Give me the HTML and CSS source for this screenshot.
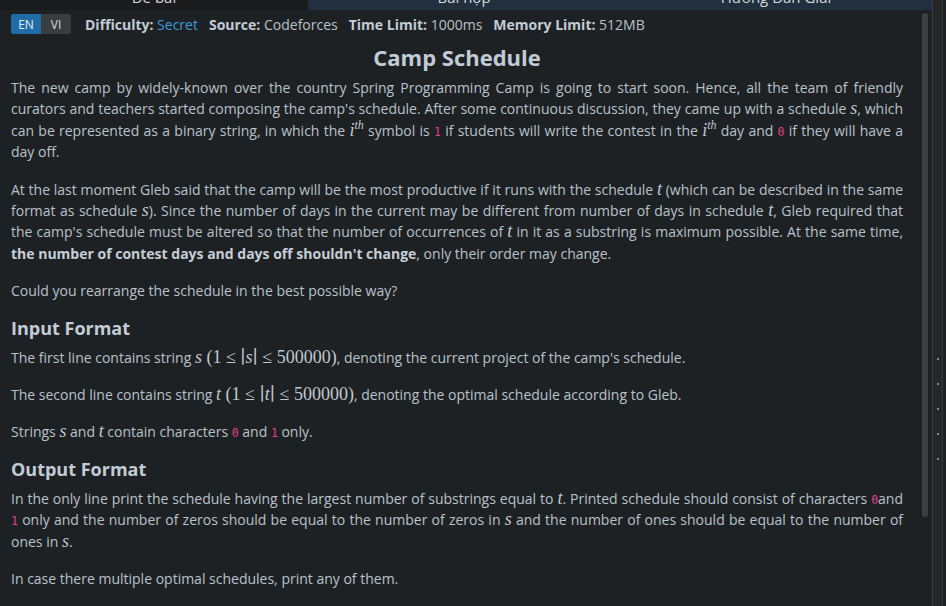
FILE: index.html
```html
<!DOCTYPE html>
<html lang="en">
<head>
<meta charset="utf-8">
<title>Camp Schedule</title>
<link rel="stylesheet" href="styles.css">
</head>
<body>
<div class="app">
  <div class="main">
    <div class="tabs">
      <div class="tab tab-plain"><span class="tab-label">Đề bài</span></div>
      <div class="tab tab-navy"><span class="tab-label">Bài nộp</span></div>
      <div class="tab tab-navy"><span class="tab-label">Hướng Dẫn Giải</span></div>
    </div>
    <div class="scroll-area">
      <div class="content">
        <div class="meta">
          <div class="lang-group">
            <span class="lang lang-active">EN</span><span class="lang">VI</span>
          </div>
          <span class="meta-item"><b>Difficulty:</b> <span class="secret">Secret</span></span>
          <span class="meta-item"><b>Source:</b> Codeforces</span>
          <span class="meta-item"><b>Time Limit:</b> 1000ms</span>
          <span class="meta-item"><b>Memory Limit:</b> 512MB</span>
        </div>

        <h1 class="title">Camp Schedule</h1>

        <p class="just">The new camp by widely-known over the country Spring Programming Camp is going to start soon. Hence, all the team of friendly curators and teachers started composing the camp's schedule. After some continuous discussion, they came up with a schedule <span class="math"><span class="mi">s</span></span>, which can be represented as a binary string, in which the <span class="math"><span class="mi">i</span><sup class="msup">th</sup></span> symbol is <code class="code">1</code> if students will write the contest in the <span class="math"><span class="mi">i</span><sup class="msup">th</sup></span> day and <code class="code">0</code> if they will have a day off.</p>

        <p class="just">At the last moment Gleb said that the camp will be the most productive if it runs with the schedule <span class="math"><span class="mi">t</span></span> (which can be described in the same format as schedule <span class="math"><span class="mi">s</span></span>). Since the number of days in the current may be different from number of days in schedule <span class="math"><span class="mi">t</span></span>, Gleb required that the camp's schedule must be altered so that the number of occurrences of <span class="math"><span class="mi">t</span></span> in it as a substring is maximum possible. At the same time, <strong>the number of contest days and days off shouldn't change</strong>, only their order may change.</p>

        <p>Could you rearrange the schedule in the best possible way?</p>

        <h2 class="section">Input Format</h2>
        <p>The first line contains string <span class="math"><span class="mi">s</span> <span class="mo">(</span>1<span class="rel">≤</span>∣<span class="mi">s</span>∣<span class="rel">≤</span>500000<span class="mo">)</span></span>, denoting the current project of the camp's schedule.</p>
        <p>The second line contains string <span class="math"><span class="mi">t</span> <span class="mo">(</span>1<span class="rel">≤</span>∣<span class="mi">t</span>∣<span class="rel">≤</span>500000<span class="mo">)</span></span>, denoting the optimal schedule according to Gleb.</p>
        <p>Strings <span class="math"><span class="mi">s</span></span> and <span class="math"><span class="mi">t</span></span> contain characters <code class="code">0</code> and <code class="code">1</code> only.</p>

        <h2 class="section">Output Format</h2>
        <p class="just">In the only line print the schedule having the largest number of substrings equal to <span class="math"><span class="mi">t</span></span>. Printed schedule should consist of characters <code class="code">0</code>and <code class="code">1</code> only and the number of zeros should be equal to the number of zeros in <span class="math"><span class="mi">s</span></span> and the number of ones should be equal to the number of ones in <span class="math"><span class="mi">s</span></span>.</p>
        <p>In case there multiple optimal schedules, print any of them.</p>
      </div>
      <div class="scrollbar"><div class="thumb"></div></div>
    </div>
  </div>
  <div class="side">
    <div class="side-inner">
      <span class="dot"></span>
      <span class="dot"></span>
      <span class="dot"></span>
      <span class="dot"></span>
      <span class="dot"></span>
    </div>
  </div>
</div>
</body>
</html>
```

FILE: styles.css
```css
html, body {
  margin: 0;
  padding: 0;
  background: #1e2124;
}

body {
  font-family: "Open Sans", "Noto Sans", sans-serif;
  font-size: 14px;
  color: #b9c1ca;
}

.app {
  display: flex;
  width: 946px;
  height: 606px;
  overflow: hidden;
}

.main {
  width: 933px;
  display: flex;
  flex-direction: column;
}

.tabs {
  display: flex;
  height: 10px;
  overflow: hidden;
}

.tab {
  flex: 1;
  display: flex;
  justify-content: center;
  overflow: hidden;
}

.tab-plain {
  flex: 0 0 308px;
  background: #1a1b1d;
}

.tab-navy {
  background: #212f3e;
}

.tab-label {
  display: block;
  margin-top: -10px;
  line-height: 14px;
  font-size: 15px;
  color: #d3d9df;
}

.scroll-area {
  flex: 1;
  display: flex;
  min-height: 0;
}

.content {
  flex: 1;
  padding: 0 17px 0 11px;
  overflow: hidden;
}

.scrollbar {
  width: 12px;
  display: flex;
  justify-content: flex-start;
}

.thumb {
  width: 6px;
  height: 504px;
  margin-top: 3px;
  margin-left: 2px;
  border-radius: 3px;
  background: #3c3f42;
}

.side {
  width: 13px;
  display: flex;
  background: #1e2022;
  border-left: 1px solid #393b3e;
}

.side-inner {
  width: 9px;
  background: #242628;
  border-right: 1px solid #393b3e;
  display: flex;
  flex-direction: column;
  align-items: center;
  padding-top: 358px;
  gap: 23px;
}

.dot {
  width: 2px;
  height: 2px;
  border-radius: 1px;
  background: #a2adb9;
}

/* meta row */
.meta {
  display: flex;
  align-items: center;
  height: 20px;
  margin-top: 4px;
  white-space: nowrap;
}

.lang-group {
  display: flex;
  height: 20px;
  margin-right: 14px;
  border-radius: 2px;
  overflow: hidden;
}

.lang {
  width: 30px;
  display: flex;
  align-items: center;
  justify-content: center;
  font-size: 12px;
  color: #d5dde5;
  background: #3a3d40;
}

.lang-active {
  background: #1f6ca6;
  color: #e4ecf3;
}

.meta-item {
  margin-right: 11px;
  color: #b9c1ca;
}

.meta-item b {
  color: #c2ccd6;
  font-weight: 700;
}

.secret {
  color: #3b9ad8;
}

.title {
  margin: 8px 0 5px;
  font-size: 22px;
  line-height: 30px;
  font-weight: 700;
  text-align: center;
  color: #c2ccd6;
}

p {
  margin: 0 0 16px;
  line-height: 21.4px;
}

.just {
  text-align: justify;
}

strong {
  font-weight: 700;
  color: #c6ced6;
}

.section {
  margin: 16px 0 8px;
  font-size: 18px;
  line-height: 21px;
  font-weight: 700;
  color: #c2ccd6;
}

.code {
  font-family: "DejaVu Sans Mono", "Liberation Mono", monospace;
  font-size: 11.5px;
  line-height: 0;
  color: #e0428a;
}

.math {
  font-family: "Liberation Serif", "DejaVu Serif", serif;
  font-size: 18px;
  line-height: 0;
  color: #c0c8d0;
}

.mi {
  font-style: italic;
}

.msup {
  font-style: italic;
  font-size: 12px;
  vertical-align: 7px;
  line-height: 0;
}

.mo {
  font-style: normal;
}

.rel {
  margin: 0 4.5px;
}
```
